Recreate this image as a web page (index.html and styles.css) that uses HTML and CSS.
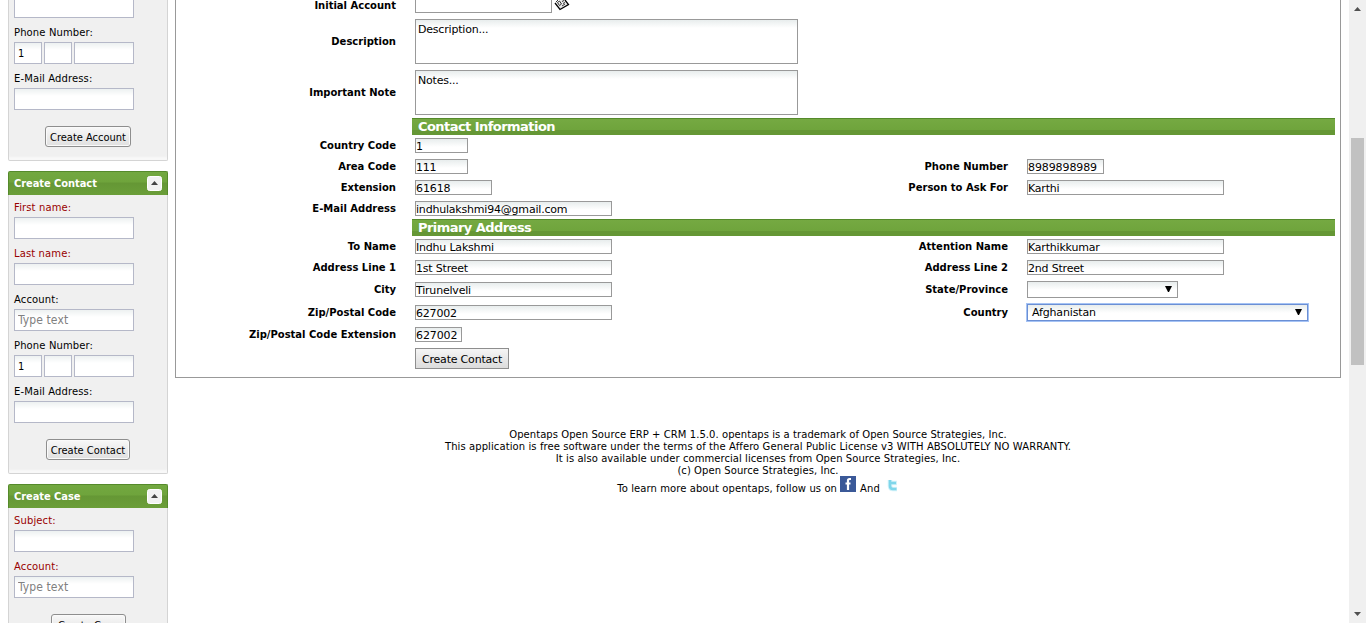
FILE: index.html
```
<!DOCTYPE html>
<html lang="en">
<head>
<meta charset="utf-8">
<title>Create Contact</title>
<link rel="stylesheet" href="styles.css">
</head>
<body>
<div class="page">
  <aside class="sidebar">
    <section class="box">
      <div class="box-body">
        <input class="side-input cut">
        <label class="side-label">Phone Number:</label>
        <div class="phone"><input class="side-input cc" value="1"><input class="side-input ac"><input class="side-input num"></div>
        <label class="side-label">E-Mail Address:</label>
        <input class="side-input">
        <button class="side-button account">Create Account</button>
      </div>
    </section>
    <section class="box">
      <header class="box-head"><span>Create Contact</span><svg class="toggle" viewBox="0 0 15 15"><rect x=".5" y=".5" width="14" height="14" rx="2" fill="#f2f2f2" stroke="#fff"/><path d="M4 9h7L7.5 5z" fill="#444"/></svg></header>
      <div class="box-body">
        <label class="side-label required">First name:</label>
        <input class="side-input">
        <label class="side-label required">Last name:</label>
        <input class="side-input">
        <label class="side-label">Account:</label>
        <input class="side-input" placeholder="Type text">
        <label class="side-label">Phone Number:</label>
        <div class="phone"><input class="side-input cc" value="1"><input class="side-input ac"><input class="side-input num"></div>
        <label class="side-label">E-Mail Address:</label>
        <input class="side-input">
        <button class="side-button contact">Create Contact</button>
      </div>
    </section>
    <section class="box">
      <header class="box-head"><span>Create Case</span><svg class="toggle" viewBox="0 0 15 15"><rect x=".5" y=".5" width="14" height="14" rx="2" fill="#f2f2f2" stroke="#fff"/><path d="M4 9h7L7.5 5z" fill="#444"/></svg></header>
      <div class="box-body">
        <label class="side-label required">Subject:</label>
        <input class="side-input">
        <label class="side-label required">Account:</label>
        <input class="side-input" placeholder="Type text">
        <button class="side-button case">Create Case</button>
      </div>
    </section>
  </aside>

  <main class="content">
    <form class="form">
      <div class="row first"><label>Initial Account</label><div class="field"><input class="w137"><svg class="lookup" viewBox="0 0 16 11"><path d="M2 2l8-3 4 6-8 5z" fill="#e8e8e8"/><path d="M1 3l5 6.500 8.500-5L11 0" fill="none" stroke="#000" stroke-width="1.300"/><path d="M2 2l2-2M3.500 2.500l2-1.500 2 3-2 1.500zM8 1.500l2-1M9 3.500l2-1M8 6l3-2" fill="none" stroke="#333"/></svg></div></div>
      <div class="row area"><label>Description</label><div class="field"><textarea>Description...</textarea></div></div>
      <div class="row area"><label>Important Note</label><div class="field"><textarea>Notes...</textarea></div></div>
      <h2 class="bar">Contact Information</h2>
      <div class="row"><label>Country Code</label><div class="field"><input class="w53" value="1"></div></div>
      <div class="row"><label>Area Code</label><div class="field"><input class="w53" value="111"></div><label>Phone Number</label><div class="field"><input class="w77" value="8989898989"></div></div>
      <div class="row"><label>Extension</label><div class="field"><input class="w77" value="61618"></div><label>Person to Ask For</label><div class="field"><input value="Karthi"></div></div>
      <div class="row"><label>E-Mail Address</label><div class="field"><input value="indhulakshmi94@gmail.com"></div></div>
      <h2 class="bar">Primary Address</h2>
      <div class="row"><label>To Name</label><div class="field"><input value="Indhu Lakshmi"></div><label>Attention Name</label><div class="field"><input value="Karthikkumar"></div></div>
      <div class="row"><label>Address Line 1</label><div class="field"><input value="1st Street"></div><label>Address Line 2</label><div class="field"><input value="2nd Street"></div></div>
      <div class="row tall"><label>City</label><div class="field"><input value="Tirunelveli"></div><label>State/Province</label><div class="field"><div class="select state"><span></span><svg viewBox="0 0 7 6"><path d="M0 0h7L4 6H3z"/></svg></div></div></div>
      <div class="row tall"><label>Zip/Postal Code</label><div class="field"><input value="627002"></div><label>Country</label><div class="field"><div class="select country"><span>Afghanistan</span><svg viewBox="0 0 7 6"><path d="M0 0h7L4 6H3z"/></svg></div></div></div>
      <div class="row"><label>Zip/Postal Code Extension</label><div class="field"><input class="w47" value="627002"></div></div>
      <div class="row submit"><span></span><div class="field"><button type="button" class="create">Create Contact</button></div></div>
    </form>
    <footer class="footer">
      <p>Opentaps Open Source ERP + CRM 1.5.0. opentaps is a trademark of Open Source Strategies, Inc.</p>
      <p class="license">This application is free software under the terms of the Affero General Public License v3 WITH ABSOLUTELY NO WARRANTY.</p>
      <p>It is also available under commercial licenses from Open Source Strategies, Inc.</p>
      <p>(c) Open Source Strategies, Inc.</p>
      <div class="social"><span>To learn more about opentaps, follow us on</span>
        <svg class="fb" viewBox="0 0 16 16"><path fill="#3b5998" d="M0 0h16v16H0z"/><path d="M11 3H9.500Q8 3 8 4.500V14M5.500 7.500h5" fill="none" stroke="#fff" stroke-width="2.200"/></svg>
        <span>And</span>
        <svg class="tw" viewBox="0 0 12 14"><path d="M3 2v6q0 3 3 3h4M3 5h7" fill="none" stroke="#d3f2f9" stroke-width="4.500" stroke-linejoin="round"/><path d="M3 2v6q0 3 3 3h3.500M3 5h6" fill="none" stroke="#7fd6ea" stroke-width="2.600"/></svg>
      </div>
    </footer>
  </main>

  <div class="scrollbar">
    <svg viewBox="0 0 7 4"><path d="M0 4h7L3.500 0z" fill="#505050"/></svg>
    <div class="thumb"></div>
    <svg viewBox="0 0 7 4"><path d="M0 0h7L3.500 4z" fill="#505050"/></svg>
  </div>
</div>
</body>
</html>
```
FILE: styles.css
```
* { box-sizing: border-box; }
body { margin: 0; overflow: hidden; background: #fff; color: #000; font: 10px/12px "DejaVu Sans", sans-serif; }
input, button, textarea { font: 11px/13px "DejaVu Sans", sans-serif; color: #000; margin: 0; border-radius: 0; outline: 0; }
.page { display: flex; height: 623px; overflow: hidden; }

.sidebar { width: 160px; margin-left: 8px; flex: none; display: flex; flex-direction: column; gap: 10px; }
.box { flex: none; }
.box-head { height: 24px; display: flex; align-items: center; justify-content: space-between; padding: 0 5px; color: #fff; font: bold 11px/13px "DejaVu Sans Condensed", "DejaVu Sans", sans-serif; letter-spacing: -.05px; background: linear-gradient(#72a840, #6fa43c 10px, #659735 11px, #6b9e39); border: 1px solid #558a2b; border-bottom: 0; border-radius: 2px 2px 0 0; }
.box-head span { padding-bottom: 1px; }
.toggle { width: 15px; height: 15px; }
.box-body { background: #f0f0f0; border: solid #d4d4d4; border-width: 0 1px 1px; border-radius: 0 0 2px 2px; padding: 0 5px 13px; display: flex; flex-direction: column; box-shadow: inset 0 -4px 2px -1px #f8f8f8; }
.side-label { height: 22px; padding-top: 7px; font-size: 10px; line-height: 12px; letter-spacing: .12px; }
.required { color: #900; }
.side-input { width: 120px; height: 22px; border: 1px solid #b5b8c8; padding: 1px 3px; margin-bottom: 2px; background: linear-gradient(#edf1f1, #fff 7px); font: 12px "DejaVu Sans Condensed", "DejaVu Sans", sans-serif; letter-spacing: .1px; }
.side-input::placeholder { color: #808080; opacity: 1; }
.cut { height: 18px; border-top: 0; background: #fff; }
.phone { display: flex; gap: 2px; }
.cc, .ac { width: 28px; font-size: 11px; }
.num { width: 60px; }
.side-button { align-self: center; height: 21px; margin-top: 14px; padding: 1px 0 0; border: 1px solid #8e8e8e; border-radius: 3px; background: linear-gradient(#f8f8f8, #e0e0e0); font: 11px "DejaVu Sans Condensed", "DejaVu Sans", sans-serif; box-shadow: inset 0 0 0 1px #fafafa; white-space: nowrap; }
.account { width: 86px; }
.contact { width: 84px; }
.case { width: 75px; }

.content { width: 1166px; margin-left: 7px; flex: none; }
.form { height: 378px; border: 1px solid #999; border-top: 0; }
.row { display: grid; grid-template-columns: 236px 376px 236px 1fr; align-items: center; height: 21px; }
.row label { text-align: right; padding-right: 16px; font-weight: bold; font-size: 10px; white-space: nowrap; }
.field { padding-left: 3px; display: flex; align-items: center; white-space: nowrap; }
.field input { width: 197px; height: 15px; padding: 1px 0 0; border: 1px solid #999; background: linear-gradient(#e8eded, #fff 8px); letter-spacing: -.2px; }
.first { height: 16px; align-items: start; }
.field .w137 { width: 137px; height: 13px; border-top: 0; background: #fff; }
.field .w53 { width: 53px; }
.field .w77 { width: 77px; letter-spacing: -.1px; }
.field .w47 { width: 47px; letter-spacing: -.1px; }
.lookup { width: 16px; height: 11px; margin-left: 2px; align-self: flex-start; }
.area { height: 51px; }
textarea { width: 383px; height: 45px; flex: none; padding: 3px 2px; resize: none; overflow: hidden; border: 1px solid #999; background: linear-gradient(#e8eded, #fff 8px); letter-spacing: -.2px; }
.bar { height: 17px; margin: 0 5px 0 236px; padding: 1px 0 0 6px; color: #fff; font: bold 13px/16px "DejaVu Sans", sans-serif; letter-spacing: -.55px; background: linear-gradient(#558a2b 0 1px, #75a942 1px, #6fa43c 12px, #659735 12px, #659735); }
.tall { height: 23px; }
.submit { height: 27px; }
.create { width: 94px; height: 21px; padding: 1px 0 0; border: 1px solid #8e8e8e; background: linear-gradient(#f5f5f5, #dcdcdc); letter-spacing: -.2px; white-space: nowrap; }
.select { height: 17px; display: flex; justify-content: space-between; align-items: center; border: 1px solid #999; padding: 0 5px 0 4px; background: linear-gradient(#e8eded, #fff 8px); font-size: 11px; letter-spacing: -.15px; }
.select span { padding-top: 1px; }
.select svg { width: 7px; height: 6px; margin-bottom: 1px; }
.state { width: 151px; }
.country { width: 281px; border-color: #6b8fd4; box-shadow: 0 0 0 1px #a5c3f5; }

.footer { padding-top: 51px; text-align: center; letter-spacing: .06px; }
.footer p { margin: 0; height: 12px; white-space: nowrap; }
.footer .license { letter-spacing: .095px; }
.social { display: flex; justify-content: center; height: 18px; line-height: 26px; margin-top: -1px; letter-spacing: .09px; }
.fb { width: 16px; height: 16px; margin: 0 4px 0 3px; }
.tw { width: 12px; height: 14px; margin-left: 7px; margin-top: 2px; }

.scrollbar { width: 17px; margin-left: 8px; flex: none; background: #f0f0f0; display: flex; flex-direction: column; align-items: center; padding: 7px 0; }
.scrollbar svg { width: 7px; height: 4px; }
.thumb { width: 13px; height: 227px; margin: 127px 0 auto; background: #c1c1c1; }
```
